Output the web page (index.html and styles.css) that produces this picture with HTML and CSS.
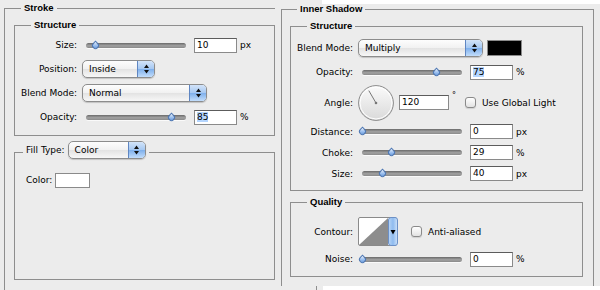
FILE: index.html
```html
<!DOCTYPE html>
<html lang="en">
<head>
    <meta charset="UTF-8">
    <meta name="viewport" content="width=device-width, initial-scale=1.0">
    <title>Layer Style</title>
    <link rel="stylesheet" href="styles.css">
</head>
<body>
    <div class="window">
        <div class="pane pane-stroke">
            <fieldset class="group group-outer">
                <legend>Stroke</legend>
                <fieldset class="group group-structure">
                    <legend>Structure</legend>
                    <div class="row">
                        <span class="label">Size:</span>
                        <div class="control">
                            <div class="slider" style="--v: 9"><span class="thumb"></span></div>
                            <span class="field">10</span>
                            <span class="unit">px</span>
                        </div>
                    </div>
                    <div class="row">
                        <span class="label">Position:</span>
                        <div class="control">
                            <div class="popup popup-position">
                                <span class="popup-text">Inside</span>
                                <span class="popup-arrows"><svg width="5" height="10" viewBox="0 0 5 10"><path d="M2.5 0.5L5 4H0Z M0 6H5L2.5 9.5Z" fill="#111"/></svg></span>
                            </div>
                        </div>
                    </div>
                    <div class="row">
                        <span class="label">Blend Mode:</span>
                        <div class="control">
                            <div class="popup popup-blend">
                                <span class="popup-text">Normal</span>
                                <span class="popup-arrows"><svg width="5" height="10" viewBox="0 0 5 10"><path d="M2.5 0.5L5 4H0Z M0 6H5L2.5 9.5Z" fill="#111"/></svg></span>
                            </div>
                        </div>
                    </div>
                    <div class="row">
                        <span class="label">Opacity:</span>
                        <div class="control">
                            <div class="slider" style="--v: 85"><span class="thumb"></span></div>
                            <span class="field"><span class="selected">85</span></span>
                            <span class="unit">%</span>
                        </div>
                    </div>
                </fieldset>
                <fieldset class="group group-fill">
                    <legend class="legend-fill">
                        <span>Fill Type:</span>
                        <span class="popup popup-fill">
                            <span class="popup-text">Color</span>
                            <span class="popup-arrows"><svg width="5" height="10" viewBox="0 0 5 10"><path d="M2.5 0.5L5 4H0Z M0 6H5L2.5 9.5Z" fill="#111"/></svg></span>
                        </span>
                    </legend>
                    <div class="color-row">
                        <span>Color:</span>
                        <span class="swatch"></span>
                    </div>
                </fieldset>
            </fieldset>
        </div>

        <div class="pane pane-shadow">
            <fieldset class="group group-outer">
                <legend>Inner Shadow</legend>
                <fieldset class="group group-structure">
                    <legend>Structure</legend>
                    <div class="row">
                        <span class="label">Blend Mode:</span>
                        <div class="control">
                            <div class="popup popup-blend">
                                <span class="popup-text">Multiply</span>
                                <span class="popup-arrows"><svg width="5" height="10" viewBox="0 0 5 10"><path d="M2.5 0.5L5 4H0Z M0 6H5L2.5 9.5Z" fill="#111"/></svg></span>
                            </div>
                            <span class="swatch swatch-black"></span>
                        </div>
                    </div>
                    <div class="row">
                        <span class="label">Opacity:</span>
                        <div class="control">
                            <div class="slider" style="--v: 74"><span class="thumb"></span></div>
                            <span class="field"><span class="selected">75</span></span>
                            <span class="unit">%</span>
                        </div>
                    </div>
                    <div class="row row-angle">
                        <span class="label">Angle:</span>
                        <div class="control">
                            <svg class="dial" width="36" height="36" viewBox="0 0 36 36">
                                <defs>
                                    <linearGradient id="dialFill" x1="0" y1="0" x2="0" y2="1">
                                        <stop offset="0" stop-color="#fbfbfb"/>
                                        <stop offset="1" stop-color="#d9d9d9"/>
                                    </linearGradient>
                                </defs>
                                <circle cx="18" cy="18" r="17.4" fill="url(#dialFill)" stroke="#8a8a8a"/>
                                <circle cx="18" cy="18" r="16" fill="none" stroke="#fff" stroke-width="1"/>
                                <line x1="18" y1="18" x2="10.8" y2="5.6" stroke="#777" stroke-width="1"/>
                                <circle cx="18" cy="18" r="1.3" fill="#777"/>
                            </svg>
                            <span class="field field-angle">120</span>
                            <span class="degree">°</span>
                            <span class="check"></span>
                            <span class="check-label">Use Global Light</span>
                        </div>
                    </div>
                    <div class="row row-short">
                        <span class="label">Distance:</span>
                        <div class="control">
                            <div class="slider" style="--v: 0"><span class="thumb"></span></div>
                            <span class="field">0</span>
                            <span class="unit">px</span>
                        </div>
                    </div>
                    <div class="row row-short">
                        <span class="label">Choke:</span>
                        <div class="control">
                            <div class="slider" style="--v: 29"><span class="thumb"></span></div>
                            <span class="field">29</span>
                            <span class="unit">%</span>
                        </div>
                    </div>
                    <div class="row row-short">
                        <span class="label">Size:</span>
                        <div class="control">
                            <div class="slider" style="--v: 20"><span class="thumb"></span></div>
                            <span class="field">40</span>
                            <span class="unit">px</span>
                        </div>
                    </div>
                </fieldset>
                <fieldset class="group group-quality">
                    <legend>Quality</legend>
                    <div class="row row-contour">
                        <span class="label">Contour:</span>
                        <div class="control">
                            <svg class="contour" width="40" height="29" viewBox="0 0 40 29">
                                <defs>
                                    <linearGradient id="contourBtn" x1="0" y1="0" x2="1" y2="0">
                                        <stop offset="0" stop-color="#b9d6f7"/>
                                        <stop offset="0.5" stop-color="#8fbbef"/>
                                        <stop offset="1" stop-color="#cfe3fa"/>
                                    </linearGradient>
                                </defs>
                                <rect x="0.5" y="0.5" width="38" height="28" rx="1.5" fill="#fff" stroke="#8a8a8a"/>
                                <path d="M1 28L30 1V28Z" fill="#8d8d8d"/>
                                <rect x="30.5" y="0.5" width="9" height="28" rx="2.5" fill="url(#contourBtn)" stroke="#6c90c6"/>
                                <path d="M32.5 13H37.5L35 17.5Z" fill="#000"/>
                            </svg>
                            <span class="check check-contour"></span>
                            <span class="check-label">Anti-aliased</span>
                        </div>
                    </div>
                    <div class="row row-noise">
                        <span class="label">Noise:</span>
                        <div class="control">
                            <div class="slider" style="--v: 0"><span class="thumb"></span></div>
                            <span class="field">0</span>
                            <span class="unit">%</span>
                        </div>
                    </div>
                </fieldset>
            </fieldset>
        </div>
    </div>
</body>
</html>
```

FILE: styles.css
```css
* {
    box-sizing: border-box;
}
body {
    margin: 0;
    background-color: #ececec;
    color: #000;
    font-family: "DejaVu Sans", sans-serif;
    font-size: 9px;
}
.window {
    display: flex;
    height: 290px;
    overflow: hidden;
}
.pane {
    display: flex;
    flex-direction: column;
}
.pane-stroke {
    width: 275px;
    padding-left: 4px;
}
.pane-shadow {
    width: 325px;
    padding: 0 0 4px 6px;
    background:
        linear-gradient(#fff, #fff) 47px 0 / 100% 4px no-repeat,
        linear-gradient(#fff, #fff) 48px 100% / 100% 4px no-repeat,
        linear-gradient(#8e8e8e, #8e8e8e) 41px 100% / 1px 4px no-repeat,
        #ececec;
}

/* group boxes */
.group {
    margin: 0;
    padding: 0;
    min-inline-size: 0;
    border: 1px solid #8e8e8e;
}
.group > legend {
    margin-left: 16px;
    padding: 0 3px;
    font-family: "Liberation Sans", Arial, sans-serif;
    font-size: 9.5px;
    font-weight: bold;
    line-height: 12px;
}
.group-outer {
    flex: 1;
    margin-top: 2px;
    padding: 5px 0 0 9px;
    border-bottom: 0;
}
.group-outer > legend {
    margin-left: 7px;
}
.pane-stroke .group-outer {
    border-right: 0;
}
.pane-shadow .group-outer {
    width: 313px;
    margin-top: 3px;
    padding: 5px 10px 0 8px;
}
.pane-stroke .group-structure {
    padding: 2px 0 6px;
}
.pane-shadow .group-structure {
    padding: 4px 0 6px;
}
.group-quality {
    margin-top: 5px;
    padding: 9px 0 7px;
}
.group-fill {
    margin-top: 5px;
    padding: 7px 0 90px 11px;
}
.group > .legend-fill {
    display: flex;
    align-items: center;
    gap: 3px;
    margin-left: -3px;
    padding: 0 3px 5px;
    font-family: "DejaVu Sans", sans-serif;
    font-size: 9px;
    font-weight: normal;
    line-height: 18px;
}

/* rows */
.row {
    display: grid;
    grid-template-columns: 62px auto;
    column-gap: 5px;
    align-items: center;
    height: 24px;
}
.row-angle {
    height: 37px;
}
.row-short {
    height: 21px;
}
.row-contour {
    height: 29px;
}
.row-noise {
    height: 20px;
    margin-top: 3px;
}
.label {
    text-align: right;
    white-space: nowrap;
}
.control {
    display: flex;
    align-items: center;
    white-space: nowrap;
}

/* slider */
.slider {
    position: relative;
    width: 108px;
    height: 11px;
    margin-right: 4px;
}
.slider::before {
    content: "";
    position: absolute;
    left: 4px;
    right: 4px;
    top: 3px;
    height: 5px;
    border-radius: 3px;
    background: linear-gradient(#6a6a6a, #a2a2a2 55%, #8a8a8a);
    box-shadow: 0 1px 0 #fafafa;
}
.thumb {
    position: absolute;
    top: 2px;
    left: calc(var(--v) * 1px + 0.5px);
    width: 7px;
    height: 7px;
    border: 1px solid #4e78b4;
    border-radius: 0 50% 50% 50%;
    background: linear-gradient(135deg, #e6f0fd, #9cc0ef 50%, #5d93dc);
    transform: rotate(45deg);
}

/* text fields */
.field {
    width: 43px;
    height: 15px;
    padding: 0 2px;
    border: 1px solid #8a8a8a;
    border-top-color: #5c5c5c;
    background-color: #fff;
    line-height: 13px;
}
.field-angle {
    width: 50px;
    margin-left: 5px;
}
.selected {
    background-color: #b4d5fe;
}
.unit {
    margin-left: 3px;
}
.degree {
    align-self: flex-start;
    margin: 6px 0 0 3px;
    font-size: 8px;
}

/* popup menus */
.popup {
    display: flex;
    height: 18px;
    border: 1px solid #8c8c8c;
    border-radius: 5px;
    background: linear-gradient(#fdfdfd, #f1f1f1 50%, #e3e3e3 52%, #f7f7f7);
    box-shadow: 0 1px 1px rgba(0, 0, 0, 0.18);
    overflow: hidden;
}
.popup-text {
    flex: 1;
    padding-left: 6px;
    line-height: 16px;
}
.popup-arrows {
    display: flex;
    align-items: center;
    justify-content: center;
    width: 17px;
    border-left: 1px solid #5f86c2;
    background: linear-gradient(#d3e4f9, #a7c9f2 48%, #7fb0ec 52%, #c2ddfb);
}
.popup-position {
    width: 73px;
}
.popup-blend {
    width: 125px;
}
.popup-fill {
    width: 78px;
}

/* swatches and checkboxes */
.color-row {
    display: flex;
    align-items: center;
    height: 18px;
}
.swatch {
    width: 35px;
    height: 15px;
    margin-left: 3px;
    border: 1px solid #8a8a8a;
    background-color: #fff;
}
.swatch-black {
    height: 16px;
    margin-left: 4px;
    background-color: #000;
}
.check {
    width: 11px;
    height: 11px;
    margin-left: 9px;
    border: 1px solid #8a8a8a;
    border-radius: 3px;
    background: linear-gradient(#fff, #e2e2e2);
    box-shadow: 0 1px 1px rgba(0, 0, 0, 0.12);
}
.check-contour {
    margin-left: 13px;
}
.check-label {
    margin-left: 6px;
}
.dial {
    display: block;
}
.contour {
    display: block;
}
```
